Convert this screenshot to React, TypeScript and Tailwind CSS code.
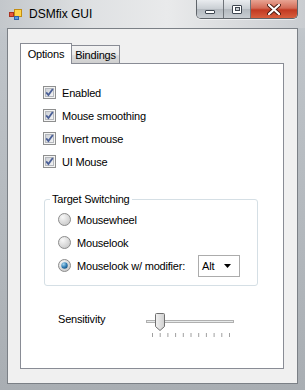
const font = "font-['Liberation_Sans',Arial,sans-serif]";

function AppIcon() {
  return (
    <svg width="13" height="11" viewBox="0 0 13 11" className="shrink-0">
      <rect x="0.5" y="3.5" width="4" height="4" fill="#e8583c" stroke="#a8321f" />
      <rect x="5.5" y="0.5" width="7" height="7" fill="#ffd54a" stroke="#c28d12" />
      <rect x="5.5" y="7.5" width="4" height="3" fill="#5b9be0" stroke="#2f63a8" />
    </svg>
  );
}

function CaptionButtons() {
  return (
    <div className="ml-auto mr-[7px] flex h-[19px] self-start overflow-hidden rounded-b-[5px] border border-t-0 border-[#5f646a] shadow-[0_1px_0_rgba(255,255,255,0.6)]">
      <div className="flex w-[27px] items-center justify-center border-r border-[#6f747a] bg-[linear-gradient(#e9ecef,#c9ced3_50%,#b3b9bf_51%,#c8cdd2)]">
        <div className="mt-[5px] h-[4px] w-[10px] rounded-[1px] border border-[#3e4650] bg-white" />
      </div>
      <div className="flex w-[27px] items-center justify-center border-r border-[#6f747a] bg-[linear-gradient(#e9ecef,#c9ced3_50%,#b3b9bf_51%,#c8cdd2)]">
        <div className="flex h-[9px] w-[10px] items-center justify-center rounded-[1px] border border-[#3e4650] bg-white">
          <div className="h-[4px] w-[5px] border border-[#3e4650] bg-[#c9ced3]" />
        </div>
      </div>
      <div className="flex w-[46px] items-center justify-center bg-[linear-gradient(#e8a493,#d36b57_45%,#c23a22_55%,#d85f3e)]">
        <svg width="14" height="11" viewBox="0 0 14 11">
          <path
            d="M2 1 L12 10 M12 1 L2 10"
            stroke="#4a1a10"
            strokeWidth="4"
            strokeLinecap="round"
          />
          <path
            d="M2 1 L12 10 M12 1 L2 10"
            stroke="#ffffff"
            strokeWidth="2.2"
            strokeLinecap="round"
          />
        </svg>
      </div>
    </div>
  );
}

function CheckBox({ label }: { label: string }) {
  return (
    <div className="flex h-[23px] items-center">
      <svg width="13" height="13" viewBox="0 0 13 13" className="shrink-0">
        <defs>
          <linearGradient id="cbg" x1="0" y1="0" x2="1" y2="1">
            <stop offset="0" stopColor="#cbcfd5" />
            <stop offset="1" stopColor="#f6f6f6" />
          </linearGradient>
        </defs>
        <rect x="0.5" y="0.5" width="12" height="12" fill="#f4f4f4" stroke="#8e8f8f" />
        <rect x="2.5" y="2.5" width="8" height="8" fill="url(#cbg)" stroke="#b5b8bd" />
        <path
          d="M3.2 6.4 L5.4 9 L9.8 3"
          fill="none"
          stroke="#4a5f97"
          strokeWidth="1.8"
        />
      </svg>
      <span className="ml-[6px] text-[11px] leading-[14px] tracking-[-0.2px] text-black">
        {label}
      </span>
    </div>
  );
}

function Radio({ label, checked }: { label: string; checked?: boolean }) {
  return (
    <div className="flex h-[23px] items-center">
      <svg width="13" height="13" viewBox="0 0 13 13" className="shrink-0">
        <defs>
          <radialGradient id="rg" cx="0.35" cy="0.3" r="0.8">
            <stop offset="0" stopColor="#f8f8f8" />
            <stop offset="1" stopColor="#c6c6c6" />
          </radialGradient>
          <radialGradient id="rdot" cx="0.35" cy="0.3" r="0.8">
            <stop offset="0" stopColor="#a9d8ef" />
            <stop offset="0.6" stopColor="#2f7bb3" />
            <stop offset="1" stopColor="#154e7a" />
          </radialGradient>
        </defs>
        <circle cx="6.5" cy="6.5" r="6" fill="url(#rg)" stroke="#8d8d8d" />
        {checked && <circle cx="6.5" cy="6.5" r="3.2" fill="url(#rdot)" />}
      </svg>
      <span className="ml-[6px] w-[121px] text-[11px] leading-[14px] tracking-[-0.2px] text-black">
        {label}
      </span>
    </div>
  );
}

function Slider() {
  const ticks = Array.from({ length: 11 }, (_, i) => 6.5 + i * 7.7);
  return (
    <svg width="92" height="30" viewBox="0 0 92 30" className="shrink-0">
      <rect x="0.5" y="11.5" width="87" height="2" fill="#e7eaea" stroke="#b0b0b0" strokeWidth="1" />
      {ticks.map((x) => (
        <line key={x} x1={x} y1="24" x2={x} y2="28" stroke="#a0a0a0" strokeWidth="1" />
      ))}
      <defs>
        <linearGradient id="thumb" x1="0" y1="0" x2="1" y2="0">
          <stop offset="0" stopColor="#f2f2f2" />
          <stop offset="1" stopColor="#cfcfcf" />
        </linearGradient>
      </defs>
      <path
        d="M9.5 5.5 Q9.5 4.5 10.5 4.5 L17.5 4.5 Q18.5 4.5 18.5 5.5 L18.5 17.5 L14 21.5 L9.5 17.5 Z"
        fill="url(#thumb)"
        stroke="#707070"
      />
    </svg>
  );
}

export default function App() {
  return (
    <div
      className={`${font} flex h-[390px] w-[305px] flex-col bg-[linear-gradient(#c9cdd1,#bfc4c9_10%,#a9aeb3)]`}
    >
      {/* title bar */}
      <div className="flex h-[28px] shrink-0 items-center bg-[linear-gradient(90deg,#c3c7cb,#dfe1e3_30%,#e9eaeb_55%,#c9ccd0)] pl-[9px]">
        <AppIcon />
        <span className="ml-[7px] text-[12px] leading-[14px] text-black">DSMfix GUI</span>
        <CaptionButtons />
      </div>

      {/* client area */}
      <div className="mx-[7px] flex h-[356px] flex-col border border-[#7b8086] bg-[#f0f0f0] pl-[12px] pt-[13px]">
        {/* tabs */}
        <div className="relative z-10 flex h-[21px] items-end">
          <div className="mb-[-1px] flex h-[21px] w-[52px] items-start justify-center border border-b-0 border-[#898c95] bg-white pt-[3px] text-[11px] leading-[14px] tracking-[-0.2px]">
            Options
          </div>
          <div className="flex h-[18px] w-[48px] items-start justify-center border border-b-0 border-l-0 border-[#898c95] bg-[linear-gradient(#f3f3f3,#ebebeb_50%,#dddddd_51%,#cfcfcf)] pt-[2px] text-[11px] leading-[14px] tracking-[-0.2px]">
            Bindings
          </div>
        </div>

        {/* tab page */}
        <div className="flex h-[306px] w-[264px] flex-col border border-[#898c95] bg-white">
          <div className="flex flex-col pl-[22px] pt-[17px]">
            <CheckBox label="Enabled" />
            <CheckBox label="Mouse smoothing" />
            <CheckBox label="Invert mouse" />
            <CheckBox label="UI Mouse" />
          </div>

          <div className="relative ml-[23px] mt-[26px] h-[87px] w-[214px] rounded-[3px] border border-[#d5dfe5] pl-[13px] pt-[8px]">
            <span className="absolute left-[5px] top-[-8px] bg-white px-[2px] text-[11px] leading-[14px] tracking-[-0.2px] text-black">
              Target Switching
            </span>
            <Radio label="Mousewheel" />
            <Radio label="Mouselook" />
            <div className="flex items-center">
              <Radio label="Mouselook w/ modifier:" checked />
              <div className="flex h-[22px] w-[42px] items-center justify-between border border-[#acacac] bg-white pl-[3px] pr-[8px] text-[11px] leading-[14px] tracking-[-0.2px]">
                Alt
                <svg width="7" height="4" viewBox="0 0 7 4">
                  <path d="M0 0 L7 0 L3.5 4 Z" fill="#000" />
                </svg>
              </div>
            </div>
          </div>

          <div className="ml-[37px] mt-[23px] flex items-start">
            <span className="mt-[3px] w-[88px] text-[11px] leading-[14px] tracking-[-0.2px] text-black">
              Sensitivity
            </span>
            <Slider />
          </div>
        </div>
      </div>
    </div>
  );
}
